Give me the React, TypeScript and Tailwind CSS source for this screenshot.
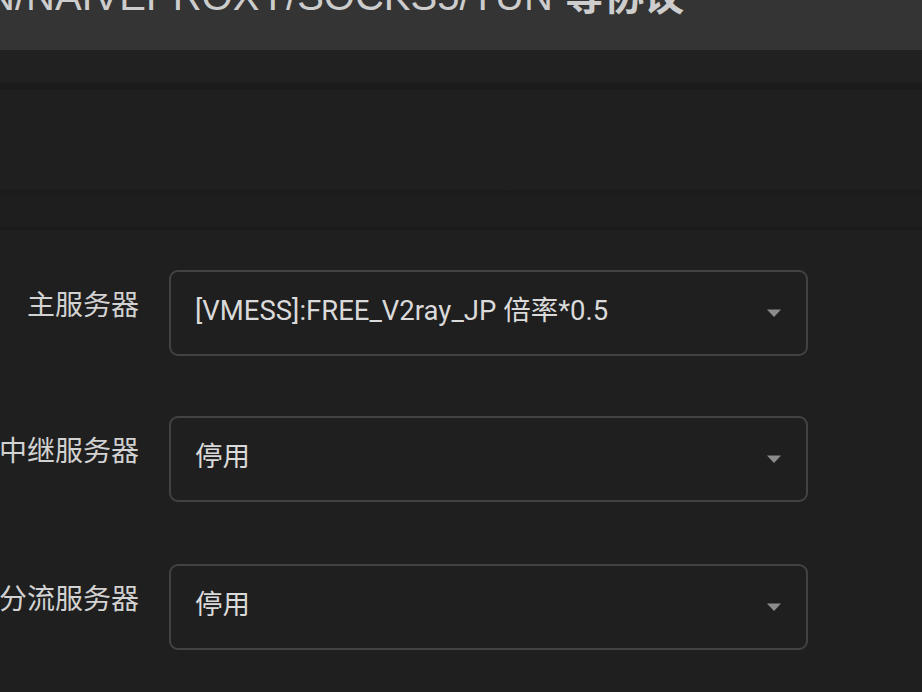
import { ReactNode } from "react"

interface Field {
  id: number
  label: string
  value: string
  top: string
}

const fields: Field[] = [
  { id: 1, label: "主服务器", value: "[VMESS]:FREE_V2ray_JP 倍率*0.5", top: "mt-[40px]" },
  { id: 2, label: "中继服务器", value: "停用", top: "mt-[60px]" },
  { id: 3, label: "分流服务器", value: "停用", top: "mt-[62px]" },
]

function Row({ field, children }: { field: Field; children: ReactNode }) {
  return (
    <div className={`flex items-start ${field.top}`}>
      <div className="flex w-[139px] shrink-0 justify-end pt-[16px] text-[28px] leading-[40px] whitespace-nowrap text-[#d2d2d2]">
        <span className="shrink-0">{field.label}</span>
      </div>
      <div className="ml-[30px]">{children}</div>
    </div>
  )
}

function Select({ value }: { value: string }) {
  return (
    <div className="flex h-[86px] w-[639px] items-center justify-between rounded-[9px] border-2 border-[#424242] pl-[24px] pr-[24px] pb-[5px]">
      <span className="text-[27.5px] leading-[40px] text-[#dadada]">{value}</span>
      <svg width="16" height="10" viewBox="0 0 16 10" className="mt-[4px]">
        <path d="M1 1.5h14L8 9z" fill="#8c8c8c" />
      </svg>
    </div>
  )
}

export default function App() {
  return (
    <div
      className="h-[692px] w-[922px] overflow-hidden bg-[#1f1f1f]"
      style={{ fontFamily: 'Roboto, "Noto Sans CJK SC", sans-serif' }}
    >
      <header className="h-[50px] overflow-hidden bg-[#343434]">
        <div
          className="-mt-[24px] -ml-[14px] whitespace-nowrap text-[40px] leading-[40px] text-[#cdcdcd]"
          style={{ fontFamily: '"Liberation Sans", "Noto Sans CJK SC", sans-serif' }}
        >
          N/NAIVEPROXY/SOCKS5/TUN <span className="font-bold">等协议</span>
        </div>
      </header>

      <div className="h-[32px] bg-[#212121]" />
      <div className="h-[8px] bg-gradient-to-b from-[#1e1e1e] to-[#1a1a1a]" />
      <div className="h-[100px] bg-[#1f1f1f]" />
      <div className="h-[8px] bg-gradient-to-b from-[#1b1b1b] to-[#1d1d1d]" />
      <div className="h-[29px] bg-[#1e1e1e]" />
      <div className="h-[3px] bg-[#1b1b1b]" />

      <div className="bg-[#1f1f1f]">
        {fields.map((f) => (
          <Row key={f.id} field={f}>
            <Select value={f.value} />
          </Row>
        ))}
      </div>
    </div>
  )
}
